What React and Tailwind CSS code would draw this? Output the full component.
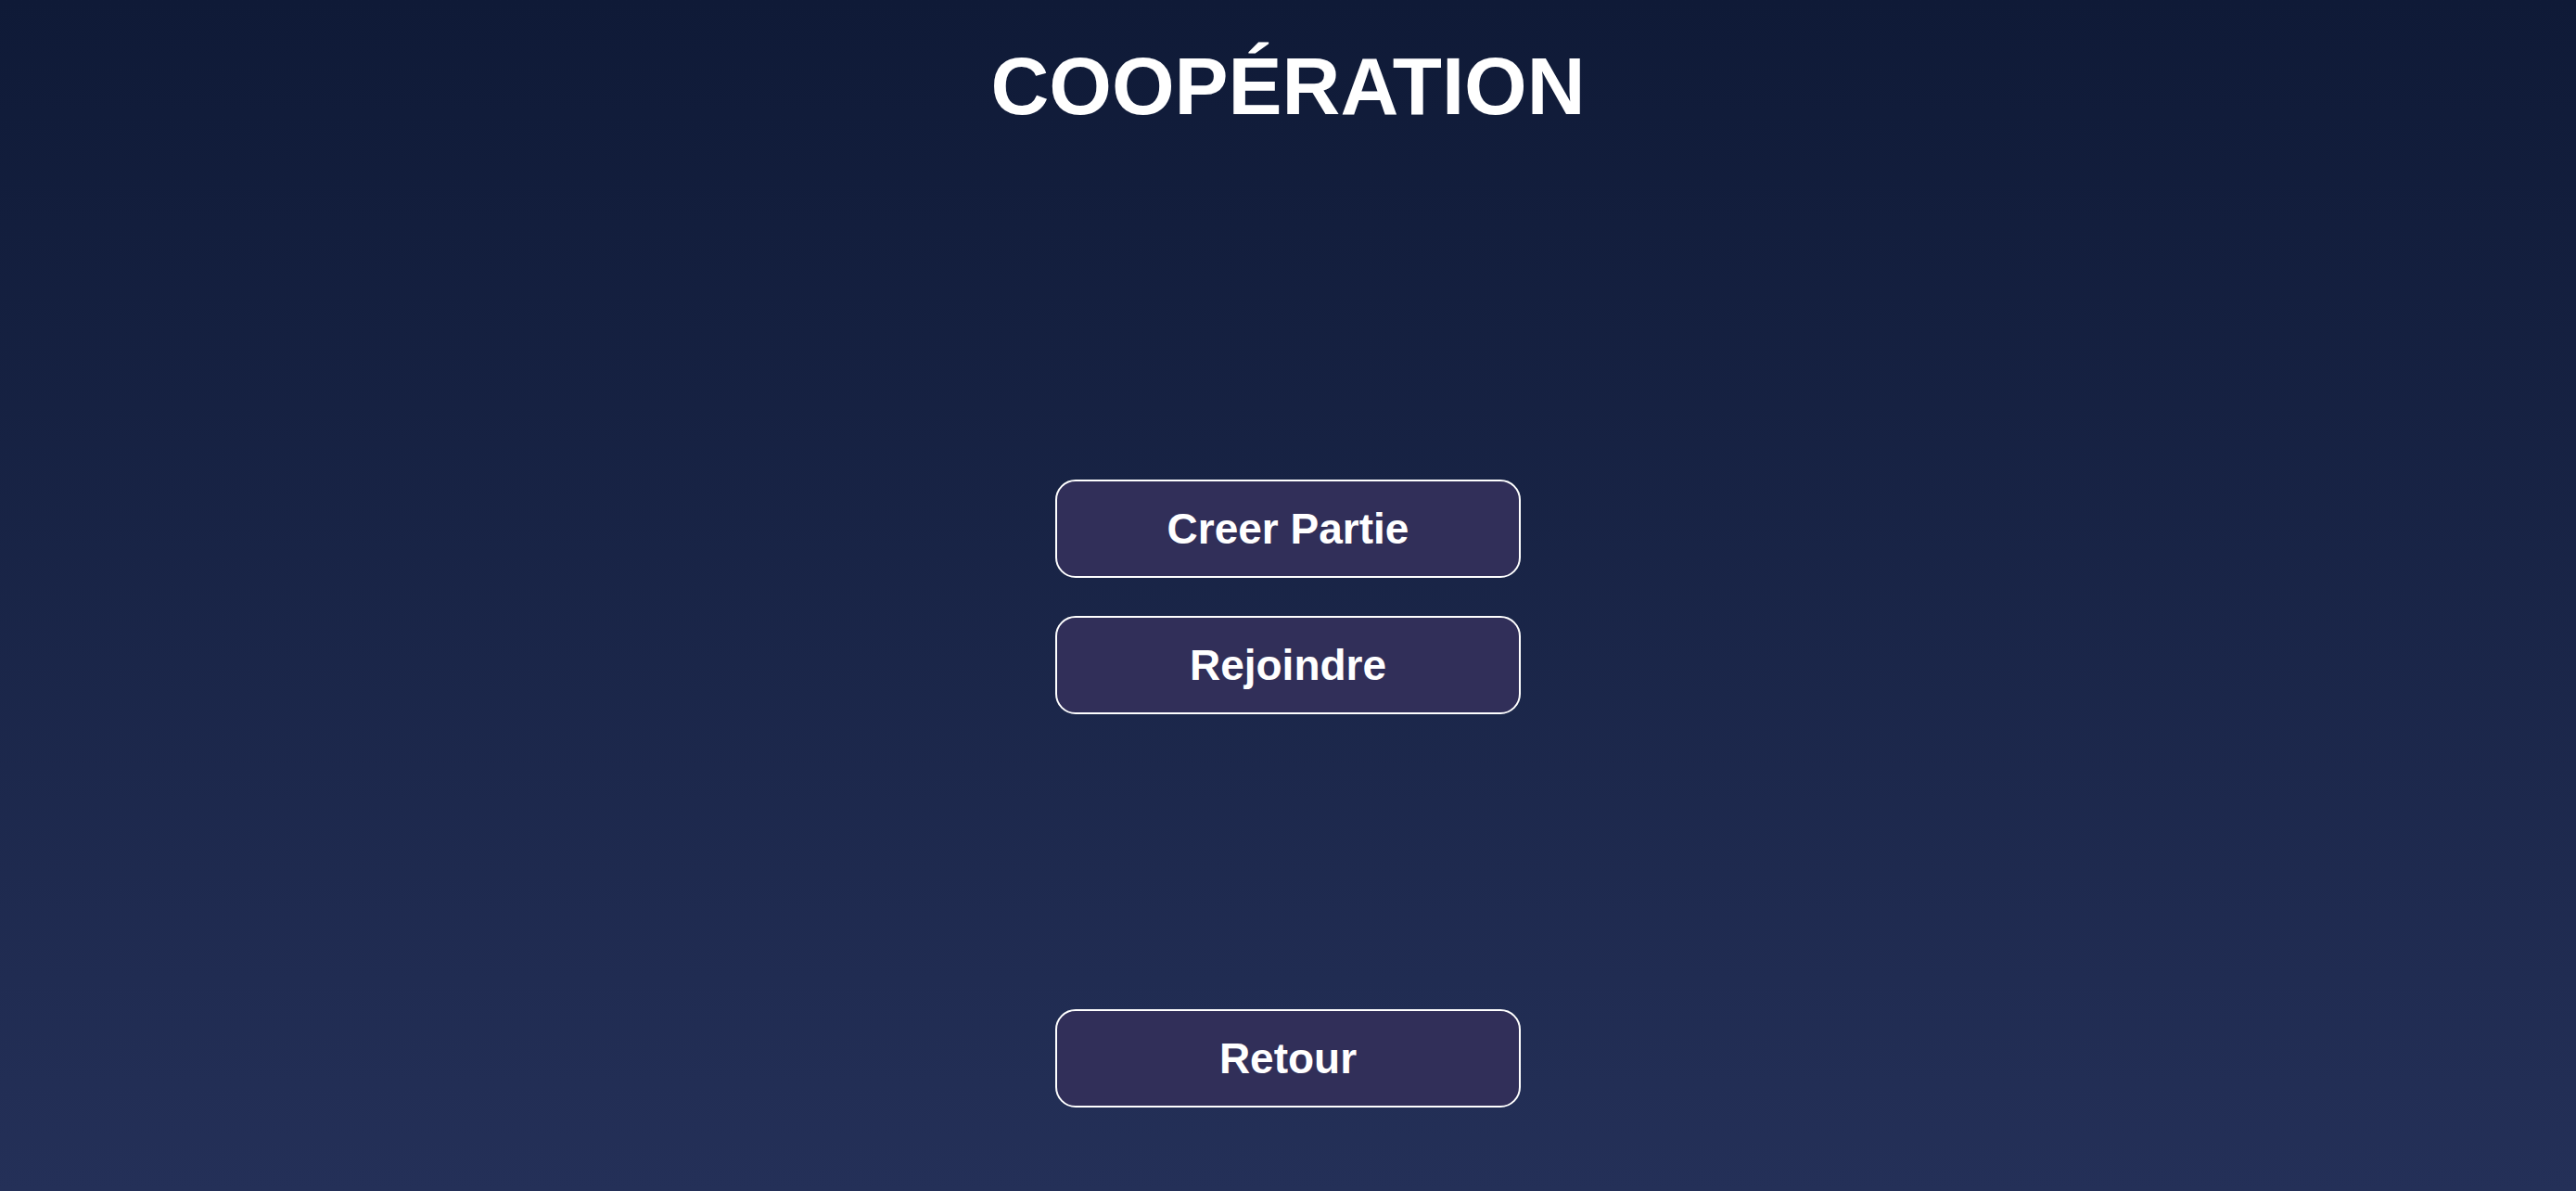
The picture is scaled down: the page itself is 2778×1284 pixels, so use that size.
import React from "react";

function MenuButton({ label, onClick }) {
  return (
    <button
      onClick={onClick}
      className="w-[502px] h-[106px] rounded-[22px] border-2 border-white bg-[#312f59] text-white text-[46px] font-bold leading-none flex items-center justify-center cursor-pointer"
    >
      {label}
    </button>
  );
}

export default function App() {
  return (
    <div
      className="w-full min-h-screen h-[1284px] flex flex-col items-center bg-gradient-to-b from-[#0f1a37] to-[#243058] text-white"
      style={{ fontFamily: '"Liberation Sans", Arial, sans-serif' }}
    >
      <h1 className="pt-[49px] text-[87px] font-bold leading-none">
        COOPÉRATION
      </h1>

      <div className="mt-[381px] flex flex-col gap-[41px]">
        <MenuButton label="Creer Partie" />
        <MenuButton label="Rejoindre" />
      </div>

      <div className="mt-[318px]">
        <MenuButton label="Retour" />
      </div>
    </div>
  );
}
